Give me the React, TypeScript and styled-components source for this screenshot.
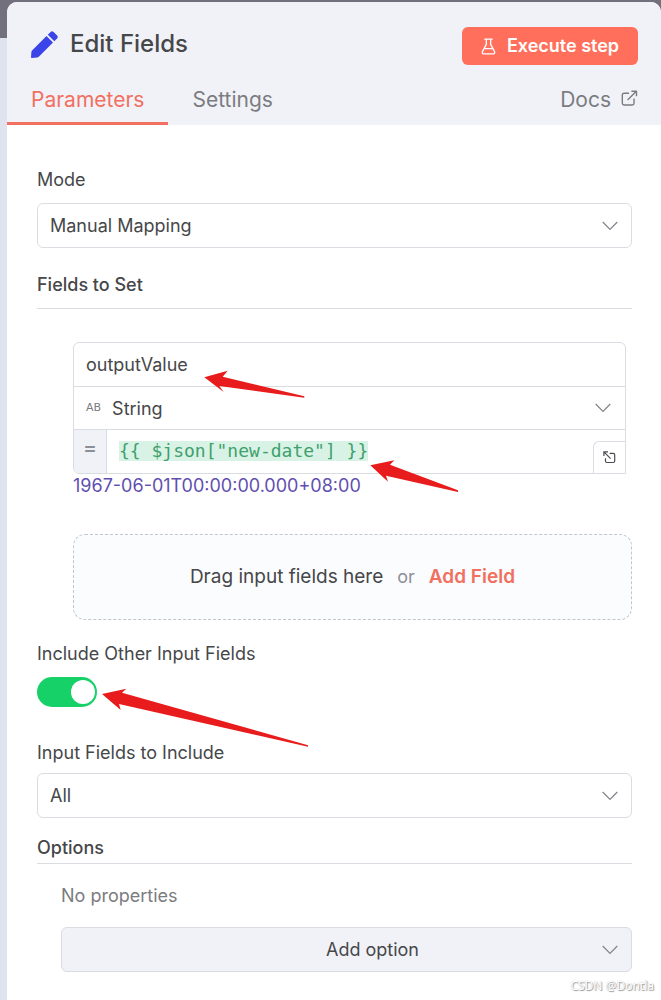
import React, { useState } from "react";
import styled, { createGlobalStyle } from "styled-components";

const color = {
  text: "#464749",
  muted: "#7b7c80",
  line: "#d9dce1",
  header: "#f1f2f8",
  primary: "#ff6f5c",
  accent: "#f1705f",
  success: "#16d068",
  arrow: "#e81c1c",
};

const GlobalStyle = createGlobalStyle`
  *, *::before, *::after { box-sizing: border-box; }
  body {
    margin: 0;
    background: #dfe3ed;
    color: ${color.text};
    font-family: Inter, "Liberation Sans", sans-serif;
    font-size: 18px;
    line-height: 24px;
  }
  button, input, select { font: inherit; color: inherit; }
`;

const Backdrop = styled.div`
  min-height: 100vh;
  display: flex;
  padding: 2px 0 0 7px;
  background: linear-gradient(#73707d 38px, #dfe3ed 38px);
`;

const Panel = styled.main`
  position: relative;
  flex: 1;
  min-width: 0;
  background: #fff;
  border-radius: 10px 10px 0 0;
  overflow: hidden;
`;

const Header = styled.header`
  background: ${color.header};
  padding-top: 25px;
`;

const TitleRow = styled.div`
  display: flex;
  align-items: center;
  padding: 0 23px 0 24px;
`;

const Title = styled.h1`
  display: flex;
  align-items: center;
  gap: 12px;
  flex: 1;
  margin: 0 0 4px;
  font-size: 24px;
  line-height: 30px;
  font-weight: 500;
`;

const ExecuteButton = styled.button`
  display: flex;
  align-items: center;
  justify-content: center;
  gap: 11px;
  width: 176px;
  height: 38px;
  padding: 0;
  border: 0;
  border-radius: 6px;
  background: ${color.primary};
  color: #fff;
  font-weight: 600;
`;

const Tabs = styled.nav`
  display: flex;
  padding-right: 23px;
  margin-top: 10px;
`;

const Tab = styled.a<{ $active?: boolean }>`
  display: flex;
  align-items: center;
  height: 50px;
  padding: 3px 24px 0;
  border-bottom: 3px solid ${(p) => (p.$active ? color.accent : "transparent")};
  color: ${(p) => (p.$active ? color.accent : color.muted)};
  font-size: 21px;
  text-decoration: none;
`;

const DocsLink = styled(Tab)`
  margin-left: auto;
  padding-right: 0;
  gap: 10px;
  svg { margin-bottom: 4px; }
`;

const Form = styled.form`
  display: flex;
  flex-direction: column;
  padding: 43px 29px 28px 30px;
`;

const Label = styled.label`
  align-self: flex-start;
`;

const SectionTitle = styled.h2<{ $gap: number }>`
  margin: 0;
  padding-bottom: ${(p) => p.$gap}px;
  border-bottom: 1px solid ${color.line};
  font-size: 18px;
  line-height: 24px;
  font-weight: 500;
`;

const SelectBox = styled.div`
  position: relative;
  display: flex;
  align-items: center;
`;

const Select = styled.select<{ $filled?: boolean }>`
  appearance: none;
  width: 100%;
  height: 45px;
  padding: ${(p) => (p.$filled ? "0 0 0 52px" : "0 40px 0 12px")};
  border: 1px solid ${color.line};
  border-radius: 6px;
  background: ${(p) => (p.$filled ? color.header : "#fff")};
  text-align-last: ${(p) => (p.$filled ? "center" : "left")};
`;

const ChevronIcon = styled.svg`
  position: absolute;
  right: 14px;
  pointer-events: none;
`;

const Assignment = styled.div`
  position: relative;
  margin: 33px 6px 0 36px;
  border: 1px solid ${color.line};
  border-radius: 6px 6px 0 6px;
`;

const AssignmentRow = styled.div`
  position: relative;
  display: flex;
  align-items: center;
  height: 43px;
  & + & { border-top: 1px solid ${color.line}; }
  &:last-of-type { height: 44px; }
`;

const NameInput = styled.input`
  flex: 1;
  min-width: 0;
  height: 100%;
  padding: 0 12px;
  border: 0;
  background: transparent;
`;

const TypeSelect = styled.select`
  appearance: none;
  flex: 1;
  height: 100%;
  margin-left: 11px;
  padding: 2px 0 0;
  border: 0;
  background: transparent;
`;

const TypeMark = styled.span`
  margin-left: 12px;
  color: ${color.muted};
  font-family: "DejaVu Sans", sans-serif;
  font-size: 11px;
  line-height: 20px;
  padding-bottom: 1px;
  -webkit-text-stroke: 0;
`;

const EqualsCell = styled.div`
  display: flex;
  justify-content: center;
  width: 33px;
  height: 100%;
  padding-top: 6px;
  border-right: 1px solid ${color.line};
  border-radius: 0 0 0 5px;
  background: ${color.header};
  color: #8d8f98;
  font-size: 21px;
  font-weight: 500;
`;

const ExpressionInput = styled.input`
  width: 23ch;
  height: 20px;
  margin: 0 auto 1px 12px;
  padding: 0;
  border: 0;
  background: #d8f3e5;
  color: #3fa06c;
  && { font-family: "DejaVu Sans Mono", "Liberation Mono", monospace; }
`;

const ExpandButton = styled.button`
  display: flex;
  align-items: center;
  justify-content: center;
  align-self: flex-end;
  width: 32px;
  height: 32px;
  padding: 0;
  border: 1px solid ${color.line};
  border-width: 1px 0 0 1px;
  border-radius: 6px 0 0 0;
  background: #fff;
`;

const Result = styled.output`
  margin-left: 36px;
  color: #5f4fb0;
`;

const DropZone = styled.div`
  display: flex;
  align-items: center;
  justify-content: center;
  gap: 14px;
  height: 86px;
  margin: 36px 0 22px 36px;
  border: 1px dashed #c2c5cc;
  border-radius: 12px;
  background: #fbfcfe;
  font-size: 19px;
`;

const Or = styled.span`
  color: #8d8f98;
  font-size: 18px;
`;

const AddFieldButton = styled.button`
  padding: 0;
  border: 0;
  background: none;
  color: ${color.accent};
  font-weight: 600;
`;

const ToggleRow = styled.div`
  position: relative;
  display: flex;
  margin: 11px 0 34px;
`;

const Toggle = styled.input`
  appearance: none;
  width: 60px;
  height: 30px;
  margin: 0;
  padding: 3px;
  border-radius: 15px;
  background: #c5c8d0;
  &::before {
    content: "";
    display: block;
    width: 24px;
    height: 24px;
    border-radius: 50%;
    background: #fff;
  }
  &:checked { background: ${color.success}; }
  &:checked::before { margin-left: 31px; }
`;

const Options = styled.div`
  display: flex;
  flex-direction: column;
  gap: 19px;
  padding: 20px 0 0 24px;
`;

const Empty = styled.p`
  margin: 0;
  color: ${color.muted};
`;

const Block = styled.div<{ $gap: number; $after: number }>`
  display: flex;
  flex-direction: column;
  gap: ${(p) => p.$gap}px;
  margin-bottom: ${(p) => p.$after}px;
`;

const Annotation = styled.svg<{ $x: number; $y: number }>`
  position: absolute;
  z-index: 2;
  left: ${(p) => p.$x}px;
  top: ${(p) => p.$y}px;
  fill: ${color.arrow};
  pointer-events: none;
`;

const Watermark = styled.small`
  position: absolute;
  right: 7px;
  bottom: 5px;
  color: #fff;
  font-family: "Noto Sans", sans-serif;
  font-size: 12px;
  line-height: 18px;
  text-shadow: 1px 1px 1px #999, 0 0 1px #bbb;
`;

const Chevron = () => (
  <ChevronIcon width="16" height="10" viewBox="0 0 16 10" fill="none" stroke="#85878e" strokeWidth="1.3" aria-hidden>
    <path d="M.7 1 8 8.4 15.3 1" />
  </ChevronIcon>
);

const Pencil = () => (
  <svg width="27" height="27" viewBox="0 0 27 27" fill="#3b44e8" aria-hidden>
    <path d="M15.5 5 22 11.5 8 25.6Q7.2 26.4 6 26.5L.9 27Q0 27 0 26.2L.4 21Q.5 20 1.3 19.2Z" />
    <path d="M16.8 3.7 19.6.9Q21 -.4 22.6.9L26.1 4.4Q27.4 6 26.1 7.4L23.3 10.2Z" />
  </svg>
);

const Flask = () => (
  <svg width="15" height="17" viewBox="0 0 15 18" fill="none" stroke="#fff" strokeWidth="1.4" strokeLinecap="round" strokeLinejoin="round" aria-hidden>
    <path d="M3.6 1.2h7.8M5.2 1.2v5.6L1.1 14.4Q.4 16.6 2.4 16.8H12.6Q14.6 16.6 13.9 14.4L9.8 6.8V1.2M3.4 11.2h8.2" />
  </svg>
);

const External = () => (
  <svg width="17" height="17" viewBox="0 0 18 18" fill="none" stroke="currentColor" strokeWidth="1.5" strokeLinejoin="round" aria-hidden>
    <path d="M8.5 3.5H3.2Q1.4 3.5 1.4 5.3V14Q1.4 15.8 3.2 15.8H12Q13.8 15.8 13.8 14V9M7 10.5 16.2 1.4M11 1.3h5.4v5.4" />
  </svg>
);

const Expand = () => (
  <svg width="13" height="13" viewBox="0 0 13 13" fill="none" stroke="#4b4d52" strokeWidth="1.2" aria-hidden>
    <path d="M6.6 2.3H10.2Q11.7 2.3 11.7 3.8V10Q11.7 11.5 10.2 11.5H4Q2.5 11.5 2.5 10V7.2M1.2 1.2 7.6 7.6M.9 5V.9H5" />
  </svg>
);

export default function App() {
  const [include, setInclude] = useState(true);
  return (
    <>
      <GlobalStyle />
      <Backdrop>
        <Panel>
          <Header>
            <TitleRow>
              <Title>
                <Pencil />
                Edit Fields
              </Title>
              <ExecuteButton type="button">
                <Flask />
                Execute step
              </ExecuteButton>
            </TitleRow>
            <Tabs>
              <Tab href="#parameters" $active>Parameters</Tab>
              <Tab href="#settings">Settings</Tab>
              <DocsLink href="#docs">
                Docs
                <External />
              </DocsLink>
            </Tabs>
          </Header>

          <Form>
            <Block $gap={11} $after={25}>
              <Label htmlFor="mode">Mode</Label>
              <SelectBox>
                <Select id="mode"><option>Manual Mapping</option></Select>
                <Chevron />
              </SelectBox>
            </Block>

            <SectionTitle $gap={11}>Fields to Set</SectionTitle>
            <Assignment>
              <AssignmentRow>
                <NameInput aria-label="Field name" defaultValue="outputValue" />
              </AssignmentRow>
              <AssignmentRow>
                <TypeMark aria-hidden>AB</TypeMark>
                <TypeSelect aria-label="Field type"><option>String</option></TypeSelect>
                <Chevron />
              </AssignmentRow>
              <AssignmentRow>
                <EqualsCell>=</EqualsCell>
                <ExpressionInput aria-label="Field value" defaultValue={'{{ $json["new-date"] }}'} spellCheck={false} />
                <ExpandButton type="button" aria-label="Open editor"><Expand /></ExpandButton>
              </AssignmentRow>
              <Annotation $x={130} $y={27} width="102" height="30" viewBox="0 0 102 30" aria-hidden>
                <path d="M.3 7.3 23.7.7 18.7 6.7 100.3 26.3V27.8L15.3 16 19.7 22Z" />
              </Annotation>
              <Annotation $x={296} $y={117} width="90" height="33" viewBox="0 0 90 33" aria-hidden>
                <path d="M.3 5.3 24.3.3 20 4.7 88 30.3V32L16 15.7 18 21.7Z" />
              </Annotation>
            </Assignment>
            <Result>1967-06-01T00:00:00.000+08:00</Result>

            <DropZone>
              <span>Drag input fields here</span>
              <Or>or</Or>
              <AddFieldButton type="button">Add Field</AddFieldButton>
            </DropZone>

            <Label htmlFor="include">Include Other Input Fields</Label>
            <ToggleRow>
              <Toggle id="include" type="checkbox" role="switch" checked={include} onChange={(e) => setInclude(e.target.checked)} />
              <Annotation $x={65} $y={11} width="207" height="60" viewBox="0 0 207 60" aria-hidden>
                <path d="M0 6 24.3.7 20 4.7 206 57.3V58.7L17 16 18.7 22Z" />
              </Annotation>
            </ToggleRow>

            <Block $gap={8} $after={18}>
              <Label htmlFor="fields">Input Fields to Include</Label>
              <SelectBox>
                <Select id="fields"><option>All</option></Select>
                <Chevron />
              </SelectBox>
            </Block>

            <SectionTitle $gap={3}>Options</SectionTitle>
            <Options>
              <Empty>No properties</Empty>
              <SelectBox>
                <Select $filled aria-label="Add option"><option>Add option</option></Select>
                <Chevron />
              </SelectBox>
            </Options>
          </Form>
          <Watermark>CSDN @Dontla</Watermark>
        </Panel>
      </Backdrop>
    </>
  );
}
